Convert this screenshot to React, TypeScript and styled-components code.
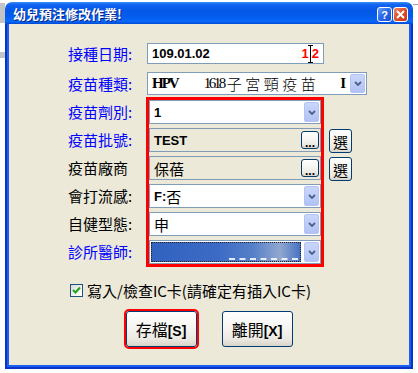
import styled, { createGlobalStyle } from 'styled-components';

const GlobalStyle = createGlobalStyle`
  html, body {
    margin: 0;
    padding: 0;
    background: #ffffff;
  }
  body {
    font-family: "Noto Sans CJK TC", "Liberation Sans", sans-serif;
    overflow: hidden;
  }
`;

const Screen = styled.div`
  display: flex;
  align-items: flex-start;
  width: 418px;
  height: 373px;
  background: #ffffff;
`;

const Strip = styled.div`
  width: 5px;
  display: flex;
  flex-direction: column;
`;

const StripBlock = styled.div<{ $h: number; $c: string }>`
  height: ${p => p.$h}px;
  background: ${p => p.$c};
`;

const Window = styled.div`
  width: 408px;
  height: 367px;
  margin-top: 2px;
  display: flex;
  flex-direction: column;
  border-radius: 7px 7px 0 0;
  overflow: hidden;
`;

const TitleBar = styled.div`
  height: 22px;
  flex-shrink: 0;
  display: flex;
  align-items: center;
  padding: 0 5px 0 8px;
  background: linear-gradient(
    180deg,
    #3d8ef9 0%,
    #0f63ef 12%,
    #0558e6 40%,
    #035ef1 70%,
    #0a69f8 88%,
    #0049d6 100%
  );
`;

const TitleText = styled.div`
  flex: 1;
  color: #ffffff;
  font-size: 13px;
  font-weight: bold;
  text-shadow: 1px 1px 0 #0a2383;
  white-space: nowrap;
`;

const CaptionButtons = styled.div`
  display: flex;
  gap: 1px;
  align-self: flex-end;
  margin-bottom: 2px;
`;

const CaptionButton = styled.div<{ $close?: boolean }>`
  box-sizing: border-box;
  width: 15px;
  height: 15px;
  border: 1px solid #ffffff;
  border-radius: 3px;
  display: flex;
  align-items: center;
  justify-content: center;
  color: #ffffff;
  font-family: "Liberation Sans", Arial, sans-serif;
  font-weight: bold;
  font-size: 11px;
  background: ${p =>
    p.$close
      ? 'linear-gradient(135deg, #f08a6a 0%, #e0502c 45%, #c8381a 100%)'
      : 'linear-gradient(135deg, #6a9ff8 0%, #2b6bec 45%, #1a4fd4 100%)'};
`;

const Frame = styled.div`
  flex: 1;
  display: flex;
  background: #0a34c8;
  padding: 0 2px 2px;
`;

const Body = styled.div`
  flex: 1;
  display: flex;
  flex-direction: column;
  background: #ece9d8;
  border: 2px solid #1a5ef2;
  border-top: none;
  padding-top: 19px;
`;

const Row = styled.div<{ $mt?: number }>`
  display: flex;
  align-items: center;
  margin-top: ${p => p.$mt ?? 0}px;
`;

const Label = styled.div<{ $blue?: boolean }>`
  width: 137px;
  flex-shrink: 0;
  box-sizing: border-box;
  padding-left: 59px;
  font-size: 15px;
  line-height: 20px;
  color: ${p => (p.$blue ? '#0000ff' : '#000000')};
  white-space: nowrap;
`;

const Field = styled.div<{ $w?: number; $h?: number; $readonly?: boolean; $pl?: number }>`
  box-sizing: border-box;
  width: ${p => (p.$w ? `${p.$w}px` : '100%')};
  height: ${p => p.$h ?? 24}px;
  flex-shrink: 0;
  display: flex;
  align-items: center;
  border: 1px solid #7f9db9;
  background: ${p => (p.$readonly ? '#ece9d8' : '#ffffff')};
  padding-left: ${p => p.$pl ?? 4}px;
  overflow: hidden;
  white-space: nowrap;
`;

const BoldValue = styled.span<{ $red?: boolean }>`
  font-family: "Liberation Sans", Arial, sans-serif;
  font-weight: bold;
  font-size: 13px;
  color: ${p => (p.$red ? '#ff0000' : '#000000')};
`;

const Value = styled.span`
  font-size: 15px;
  color: #000000;
`;

const RightGroup = styled.div`
  margin-left: auto;
  margin-right: 4px;
  display: flex;
  align-items: center;
`;

const SerifText = styled.span`
  font-family: "Liberation Serif", "Times New Roman", serif;
  font-weight: bold;
  font-size: 15px;
  letter-spacing: -2px;
`;

const SerifDigits = styled.span`
  font-family: "Liberation Serif", "Times New Roman", serif;
  font-size: 15px;
  letter-spacing: -2.5px;
  margin-left: 26px;
`;

const SpacedCjk = styled.span`
  font-size: 15px;
  font-weight: 300;
  letter-spacing: 3.5px;
  margin-left: 3px;
`;

const ClipGlyph = styled.span`
  margin-left: auto;
  margin-right: 4px;
  font-family: "Liberation Serif", serif;
  font-weight: bold;
  font-size: 15px;
`;

const DropButton = styled.div`
  box-sizing: border-box;
  align-self: stretch;
  width: 15px;
  flex-shrink: 0;
  margin: 1px 1px 1px auto;
  border: 1px solid #b4c4f0;
  border-radius: 2px;
  background: linear-gradient(180deg, #c9d6fb 0%, #bccbf8 55%, #b0c2f4 100%);
  display: flex;
  align-items: center;
  justify-content: center;
`;

const Section = styled.div`
  display: flex;
  margin-top: 2px;
`;

const LabelCol = styled.div`
  display: flex;
  flex-direction: column;
  gap: 8px;
  padding-top: 5px;
`;

const RedBox = styled.div`
  width: 178px;
  box-sizing: border-box;
  border: 3px solid #ff0000;
  display: flex;
  flex-direction: column;
  gap: 4px;
`;

const SideCol = styled.div`
  display: flex;
  flex-direction: column;
  gap: 4px;
  padding-top: 32px;
  margin-left: 5px;
`;

const XpButton = styled.button<{ $w: number; $h: number; $marked?: boolean }>`
  box-sizing: border-box;
  width: ${p => p.$w}px;
  height: ${p => p.$h}px;
  flex-shrink: 0;
  padding: 0;
  border: 1px solid #003c74;
  border-radius: 3px;
  background: linear-gradient(180deg, #ffffff 0%, #f6f5f1 45%, #ebe9e2 80%, #d9d4c8 100%);
  display: flex;
  align-items: center;
  justify-content: center;
  font-family: "Noto Sans CJK TC", "Liberation Sans", sans-serif;
  color: #000000;
  outline: ${p => (p.$marked ? '2px solid #ff0000' : 'none')};
  outline-offset: 0;
`;

const EllipsisText = styled.span`
  font-family: "Liberation Sans", Arial, sans-serif;
  font-weight: bold;
  font-size: 12px;
  line-height: 1;
  margin-top: 5px;
`;

const ButtonGlyph = styled.span<{ $size: number }>`
  font-size: ${p => p.$size}px;
  line-height: 1;
`;

const Mnemonic = styled.span`
  font-family: "Liberation Sans", Arial, sans-serif;
  font-weight: bold;
  font-size: 14px;
`;

const Selection = styled.div`
  position: relative;
  flex: 1;
  align-self: stretch;
  margin: 1px 3px 1px 1px;
  background: linear-gradient(
    90deg,
    #3162be 0%,
    #3c6bc5 45%,
    #5680c8 68%,
    #90a8cf 86%,
    #4670c2 100%
  );
  outline: 1px dotted #222222;
  outline-offset: -1px;

  &::after {
    content: '';
    position: absolute;
    left: 52%;
    right: 3px;
    bottom: 2px;
    border-bottom: 2px dashed rgba(255, 255, 255, 0.85);
  }
`;

const CheckRow = styled.div`
  display: flex;
  align-items: center;
  gap: 4px;
  margin-top: 16px;
  padding-left: 61px;
  height: 14px;
  font-size: 15px;
  color: #000000;
  white-space: nowrap;
`;

const CheckBox = styled.div`
  box-sizing: border-box;
  width: 13px;
  height: 13px;
  border: 1px solid #1c5180;
  background: linear-gradient(135deg, #dcdbd5 0%, #f4f4f0 60%, #ffffff 100%);
  display: flex;
  align-items: center;
  justify-content: center;
`;

const Actions = styled.div`
  display: flex;
  justify-content: center;
  gap: 25px;
  margin-top: 14px;
`;

const Chevron = () => (
  <svg width="8" height="5" viewBox="0 0 8 5">
    <path d="M1 1 L4 4 L7 1" stroke="#4d6185" strokeWidth="1.8" fill="none" />
  </svg>
);

const Caret = () => (
  <svg width="5" height="18" viewBox="0 0 5 18" style={{ margin: '0 -1px' }}>
    <path d="M0 0.5 H5 M2.5 0.5 V17.5 M0 17.5 H5" stroke="#000" strokeWidth="1" fill="none" />
  </svg>
);

const App = () => (
  <Screen>
    <GlobalStyle />
    <Strip>
      <StripBlock $h={3} $c="#ffffff" />
      <StripBlock $h={20} $c="#c4c4c4" />
      <StripBlock $h={29} $c="#ffffff" />
      <StripBlock $h={6} $c="#c4c4c4" />
    </Strip>
    <Window>
      <TitleBar>
        <TitleText>幼兒預注修改作業!</TitleText>
        <CaptionButtons>
          <CaptionButton>?</CaptionButton>
          <CaptionButton $close>
            <svg width="9" height="9" viewBox="0 0 9 9">
              <path d="M1 1 L8 8 M8 1 L1 8" stroke="#fff" strokeWidth="2" />
            </svg>
          </CaptionButton>
        </CaptionButtons>
      </TitleBar>
      <Frame>
        <Body>
          <Row>
            <Label $blue>接種日期:</Label>
            <Field $w={177} $h={21} style={{ marginLeft: 1 }}>
              <BoldValue>109.01.02</BoldValue>
              <RightGroup>
                <BoldValue $red>1</BoldValue>
                <Caret />
                <BoldValue $red>2</BoldValue>
              </RightGroup>
            </Field>
          </Row>
          <Row $mt={8}>
            <Label $blue>疫苗種類:</Label>
            <Field $w={220} $h={23} style={{ marginLeft: 1 }}>
              <SerifText>HPV</SerifText>
              <SerifDigits>1618</SerifDigits>
              <SpacedCjk>子宮頸疫苗</SpacedCjk>
              <ClipGlyph>I</ClipGlyph>
              <DropButton style={{ marginLeft: 0 }}>
                <Chevron />
              </DropButton>
            </Field>
          </Row>
          <Section>
            <LabelCol>
              <Label $blue>疫苗劑別:</Label>
              <Label $blue>疫苗批號:</Label>
              <Label>疫苗廠商</Label>
              <Label>會打流感:</Label>
              <Label>自健型態:</Label>
              <Label $blue>診所醫師:</Label>
            </LabelCol>
            <RedBox>
              <Field>
                <BoldValue>1</BoldValue>
                <DropButton>
                  <Chevron />
                </DropButton>
              </Field>
              <Field $readonly>
                <BoldValue>TEST</BoldValue>
                <XpButton $w={18} $h={18} style={{ marginLeft: 'auto', marginRight: 1 }}>
                  <EllipsisText>...</EllipsisText>
                </XpButton>
              </Field>
              <Field $readonly>
                <Value>保蓓</Value>
                <XpButton $w={18} $h={18} style={{ marginLeft: 'auto', marginRight: 1 }}>
                  <EllipsisText>...</EllipsisText>
                </XpButton>
              </Field>
              <Field>
                <BoldValue>F:</BoldValue>
                <Value>否</Value>
                <DropButton>
                  <Chevron />
                </DropButton>
              </Field>
              <Field>
                <Value>申</Value>
                <DropButton>
                  <Chevron />
                </DropButton>
              </Field>
              <Field $pl={0}>
                <Selection />
                <DropButton style={{ marginLeft: 0 }}>
                  <Chevron />
                </DropButton>
              </Field>
            </RedBox>
            <SideCol>
              <XpButton $w={23} $h={24}>
                <ButtonGlyph $size={15}>選</ButtonGlyph>
              </XpButton>
              <XpButton $w={23} $h={24}>
                <ButtonGlyph $size={15}>選</ButtonGlyph>
              </XpButton>
            </SideCol>
          </Section>
          <CheckRow>
            <CheckBox>
              <svg width="9" height="9" viewBox="0 0 9 9">
                <path d="M1 4 L3.5 6.5 L8 1.5" stroke="#21a121" strokeWidth="2" fill="none" />
              </svg>
            </CheckBox>
            <span>寫入/檢查IC卡(請確定有插入IC卡)</span>
          </CheckRow>
          <Actions>
            <XpButton $w={71} $h={36} $marked>
              <ButtonGlyph $size={16}>
                存檔<Mnemonic>[S]</Mnemonic>
              </ButtonGlyph>
            </XpButton>
            <XpButton $w={71} $h={36}>
              <ButtonGlyph $size={16}>
                離開<Mnemonic>[X]</Mnemonic>
              </ButtonGlyph>
            </XpButton>
          </Actions>
        </Body>
      </Frame>
    </Window>
    <Strip>
      <StripBlock $h={4} $c="#ffffff" />
      <StripBlock $h={1} $c="#a0a0a0" />
    </Strip>
  </Screen>
);

export default App;
